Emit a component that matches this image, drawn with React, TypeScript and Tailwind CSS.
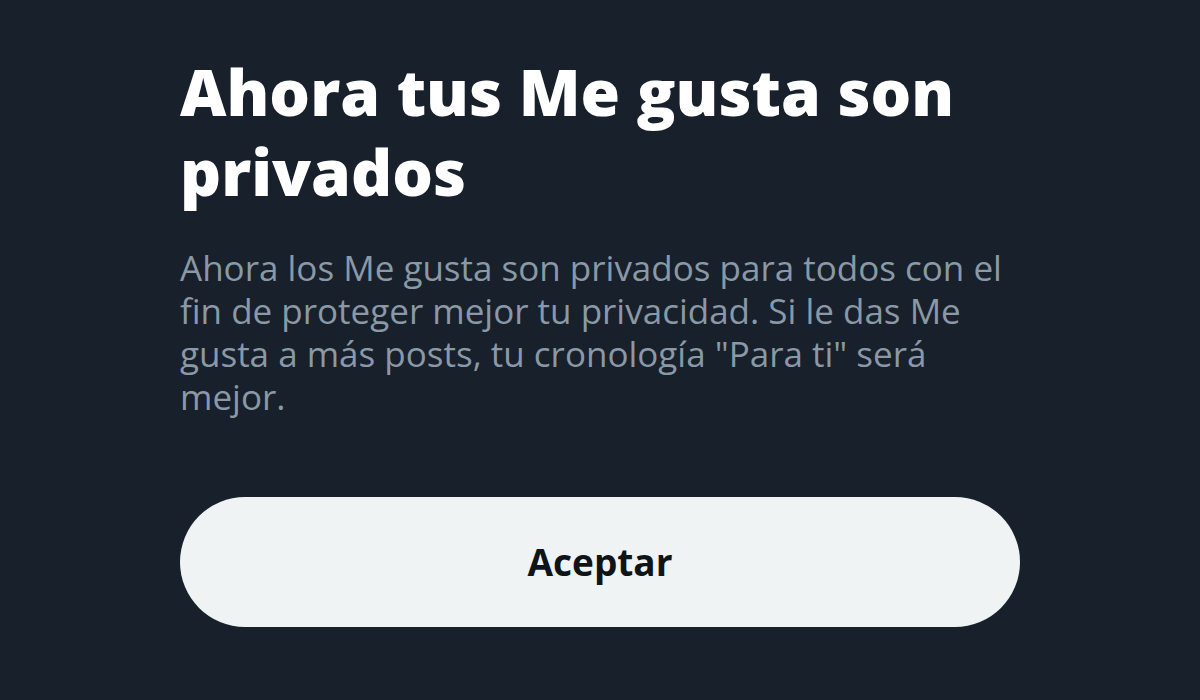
export default function App() {
  return (
    <div className="w-[1200px] h-[700px] overflow-hidden bg-[#17202b] font-['Open_Sans','Noto_Sans',sans-serif]">
      <div className="w-[840px] ml-[180px] pt-[52px] flex flex-col">
        <h1 className="text-[64px] leading-[80px] font-extrabold text-white">
          Ahora tus Me gusta son privados
        </h1>
        <p className="mt-[34px] text-[35px] leading-[43px] text-[#8b98a5] pr-[10px]">
          Ahora los Me gusta son privados para todos con el fin de proteger mejor tu
          privacidad. Si le das Me gusta a más posts, tu cronología "Para ti" será
          mejor.
        </p>
        <button className="mt-[79px] h-[130px] w-[840px] rounded-full bg-[#eff3f4] text-[#0f1419] text-[37px] font-bold">
          Aceptar
        </button>
      </div>
    </div>
  );
}
